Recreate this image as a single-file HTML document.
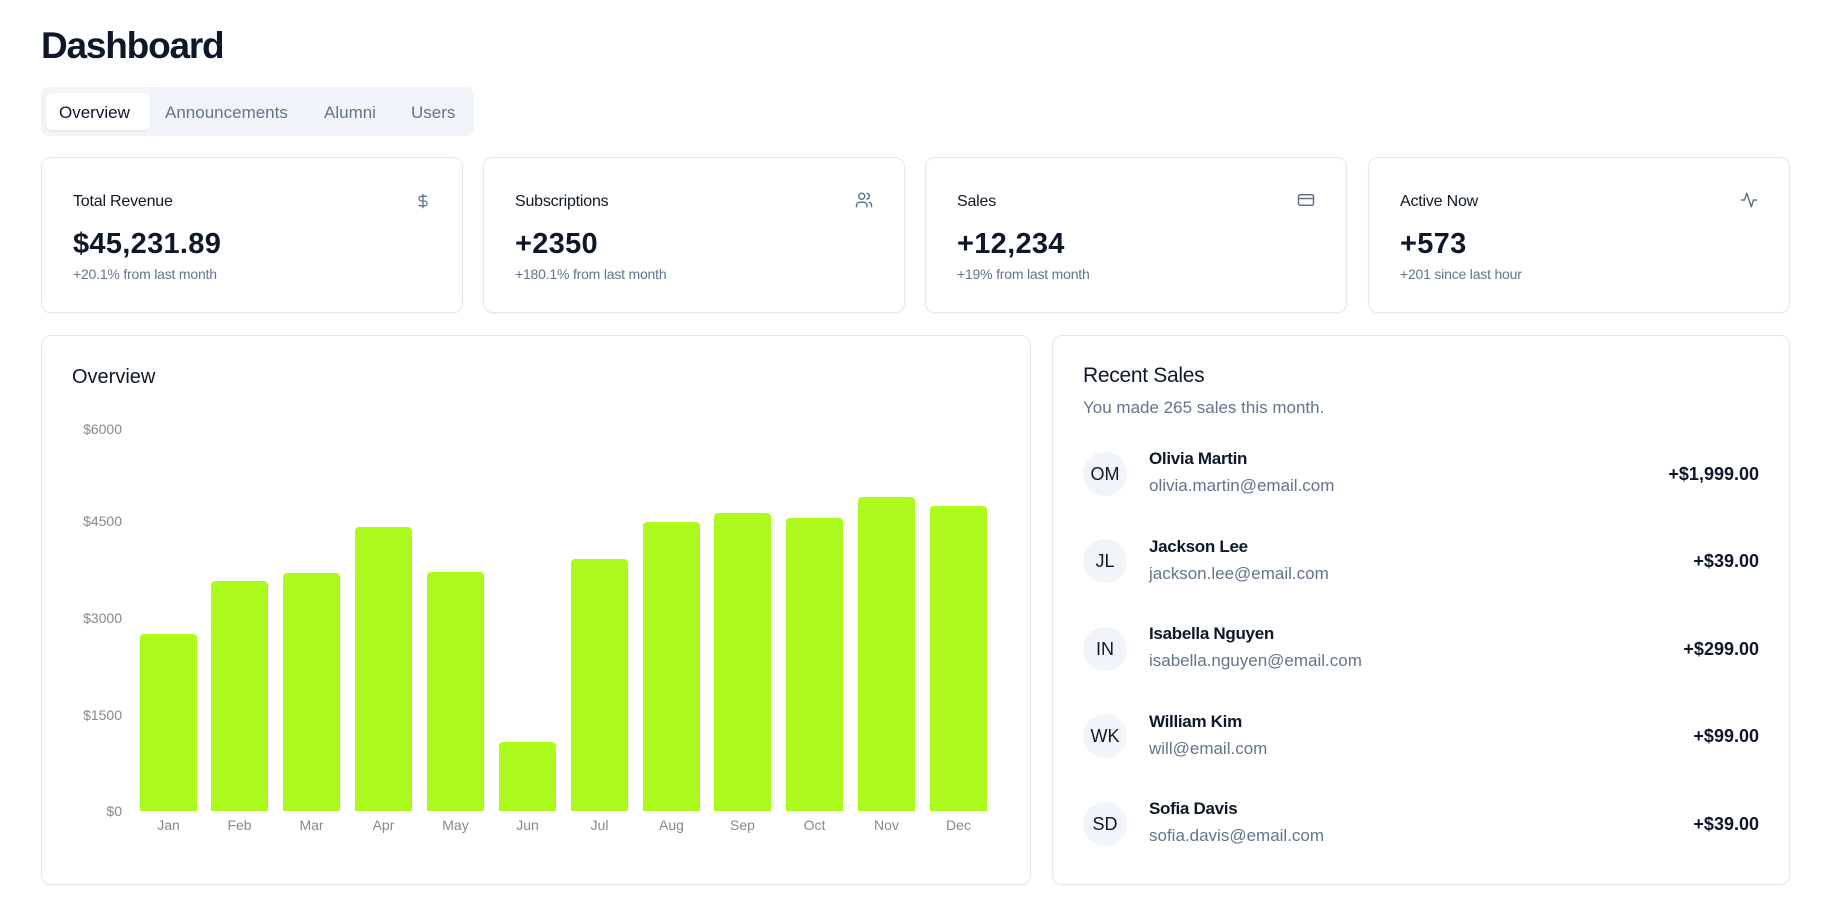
<!DOCTYPE html>
<html><head><meta charset="utf-8"><style>
*{box-sizing:border-box;margin:0;padding:0}
body{width:1830px;height:912px;background:#fff;font-family:"Liberation Sans",sans-serif;color:#0f172a;position:relative;overflow:hidden}
.abs{position:absolute}
h1{position:absolute;left:41px;top:25px;font-size:37px;font-weight:700;letter-spacing:-1.2px}
.tabs{position:absolute;left:41px;top:87px;width:433px;height:49px;background:#f1f5f9;border-radius:8px}
.tab{position:absolute;top:6px;height:37px;line-height:39px;font-size:17px;color:#64748b}
.tab.on{background:#fff;color:#0f172a;border-radius:6px;box-shadow:0 1px 2px rgba(0,0,0,.08);padding:0 13px;left:5px;width:104px}
.card{position:absolute;border:1px solid #e2e8f0;border-radius:10px;background:#fff;box-shadow:0 1px 2px rgba(0,0,0,.04)}
.ct{position:absolute;left:31px;top:35px;font-size:16px;font-weight:500;letter-spacing:-0.2px}
.cv{position:absolute;left:31px;top:70px;font-size:29px;font-weight:700;letter-spacing:0.3px}
.cs{position:absolute;left:31px;top:108px;font-size:14px;color:#64748b;letter-spacing:-0.2px}
.ic{position:absolute;right:31px;top:33px}
.yl{position:absolute;right:0;font-size:14px;color:#888;width:60px;text-align:right}
.bar{position:absolute;width:57px;background:#adfa1d;border-radius:4px 4px 0 0}
.ml{position:absolute;width:57px;text-align:center;font-size:14px;color:#888;top:817px}
.av{position:absolute;left:1083px;width:44px;height:44px;border-radius:50%;background:#f1f5f9;text-align:center;line-height:44px;font-size:18px}
.nm{position:absolute;left:1149px;font-size:17px;font-weight:700;letter-spacing:-0.3px}
.em{position:absolute;left:1149px;font-size:17px;color:#64748b}
.am{position:absolute;right:71px;font-size:18px;font-weight:600}
</style></head><body>
<h1>Dashboard</h1>
<div class="tabs">
<div class="tab on">Overview</div>
<div class="tab" style="left:124px">Announcements</div>
<div class="tab" style="left:283px">Alumni</div>
<div class="tab" style="left:370px">Users</div>
</div>

<div class="card" style="left:41px;top:157px;width:422px;height:156px">
<div class="ct">Total Revenue</div>
<svg class="ic" width="16" height="20" viewBox="0 0 24 24" fill="none" stroke="#64748b" stroke-width="2" stroke-linecap="round"><path d="M12 2v20M17 5H9.5a3.5 3.5 0 0 0 0 7h5a3.5 3.5 0 0 1 0 7H6"/></svg>
<div class="cv">$45,231.89</div><div class="cs">+20.1% from last month</div></div>
<div class="card" style="left:483px;top:157px;width:422px;height:156px">
<div class="ct">Subscriptions</div>
<svg class="ic" width="18" height="18" viewBox="0 0 24 24" fill="none" stroke="#64748b" stroke-width="2" stroke-linecap="round"><path d="M16 21v-2a4 4 0 0 0-4-4H6a4 4 0 0 0-4 4v2"/><circle cx="9" cy="7" r="4"/><path d="M22 21v-2a4 4 0 0 0-3-3.87M16 3.13a4 4 0 0 1 0 7.75"/></svg>
<div class="cv">+2350</div><div class="cs">+180.1% from last month</div></div>
<div class="card" style="left:925px;top:157px;width:422px;height:156px">
<div class="ct">Sales</div>
<svg class="ic" width="18" height="18" viewBox="0 0 24 24" fill="none" stroke="#64748b" stroke-width="2"><rect x="2" y="5" width="20" height="14" rx="2"/><path d="M2 10h20"/></svg>
<div class="cv">+12,234</div><div class="cs">+19% from last month</div></div>
<div class="card" style="left:1368px;top:157px;width:422px;height:156px">
<div class="ct">Active Now</div>
<svg class="ic" width="18" height="18" viewBox="0 0 24 24" fill="none" stroke="#64748b" stroke-width="2" stroke-linecap="round" stroke-linejoin="round"><path d="M22 12h-4l-3 9L9 3l-3 9H2"/></svg>
<div class="cv">+573</div><div class="cs">+201 since last hour</div></div>

<div class="card" style="left:41px;top:335px;width:990px;height:550px">
<div class="abs" style="left:30px;top:30px;font-size:20px;font-weight:500">Overview</div></div>
<div class="abs" style="left:62px;top:0;width:60px;height:912px">
<div class="yl" style="top:421px">$6000</div>
<div class="yl" style="top:513px">$4500</div>
<div class="yl" style="top:610px">$3000</div>
<div class="yl" style="top:707px">$1500</div>
<div class="yl" style="top:803px">$0</div>
</div>
<div class="bar" style="left:140px;top:634px;height:177px"></div>
<div class="bar" style="left:211px;top:581px;height:230px"></div>
<div class="bar" style="left:283px;top:573px;height:238px"></div>
<div class="bar" style="left:355px;top:527px;height:284px"></div>
<div class="bar" style="left:427px;top:572px;height:239px"></div>
<div class="bar" style="left:499px;top:742px;height:69px"></div>
<div class="bar" style="left:571px;top:559px;height:252px"></div>
<div class="bar" style="left:643px;top:522px;height:289px"></div>
<div class="bar" style="left:714px;top:513px;height:298px"></div>
<div class="bar" style="left:786px;top:518px;height:293px"></div>
<div class="bar" style="left:858px;top:497px;height:314px"></div>
<div class="bar" style="left:930px;top:506px;height:305px"></div>
<div class="ml" style="left:140px">Jan</div><div class="ml" style="left:211px">Feb</div><div class="ml" style="left:283px">Mar</div><div class="ml" style="left:355px">Apr</div><div class="ml" style="left:427px">May</div><div class="ml" style="left:499px">Jun</div><div class="ml" style="left:571px">Jul</div><div class="ml" style="left:643px">Aug</div><div class="ml" style="left:714px">Sep</div><div class="ml" style="left:786px">Oct</div><div class="ml" style="left:858px">Nov</div><div class="ml" style="left:930px">Dec</div>

<div class="card" style="left:1052px;top:335px;width:738px;height:550px"></div>
<div class="abs" style="left:1083px;top:364px;font-size:21px;font-weight:500;letter-spacing:-0.3px">Recent Sales</div>
<div class="abs" style="left:1083px;top:398px;font-size:17px;color:#64748b">You made 265 sales this month.</div>

<div class="av" style="top:452px">OM</div><div class="nm" style="top:449px">Olivia Martin</div><div class="em" style="top:476px">olivia.martin@email.com</div><div class="am" style="top:464px">+$1,999.00</div>
<div class="av" style="top:539px">JL</div><div class="nm" style="top:537px">Jackson Lee</div><div class="em" style="top:564px">jackson.lee@email.com</div><div class="am" style="top:551px">+$39.00</div>
<div class="av" style="top:627px">IN</div><div class="nm" style="top:624px">Isabella Nguyen</div><div class="em" style="top:651px">isabella.nguyen@email.com</div><div class="am" style="top:639px">+$299.00</div>
<div class="av" style="top:714px">WK</div><div class="nm" style="top:712px">William Kim</div><div class="em" style="top:739px">will@email.com</div><div class="am" style="top:726px">+$99.00</div>
<div class="av" style="top:802px">SD</div><div class="nm" style="top:799px">Sofia Davis</div><div class="em" style="top:826px">sofia.davis@email.com</div><div class="am" style="top:814px">+$39.00</div>
</body></html>
